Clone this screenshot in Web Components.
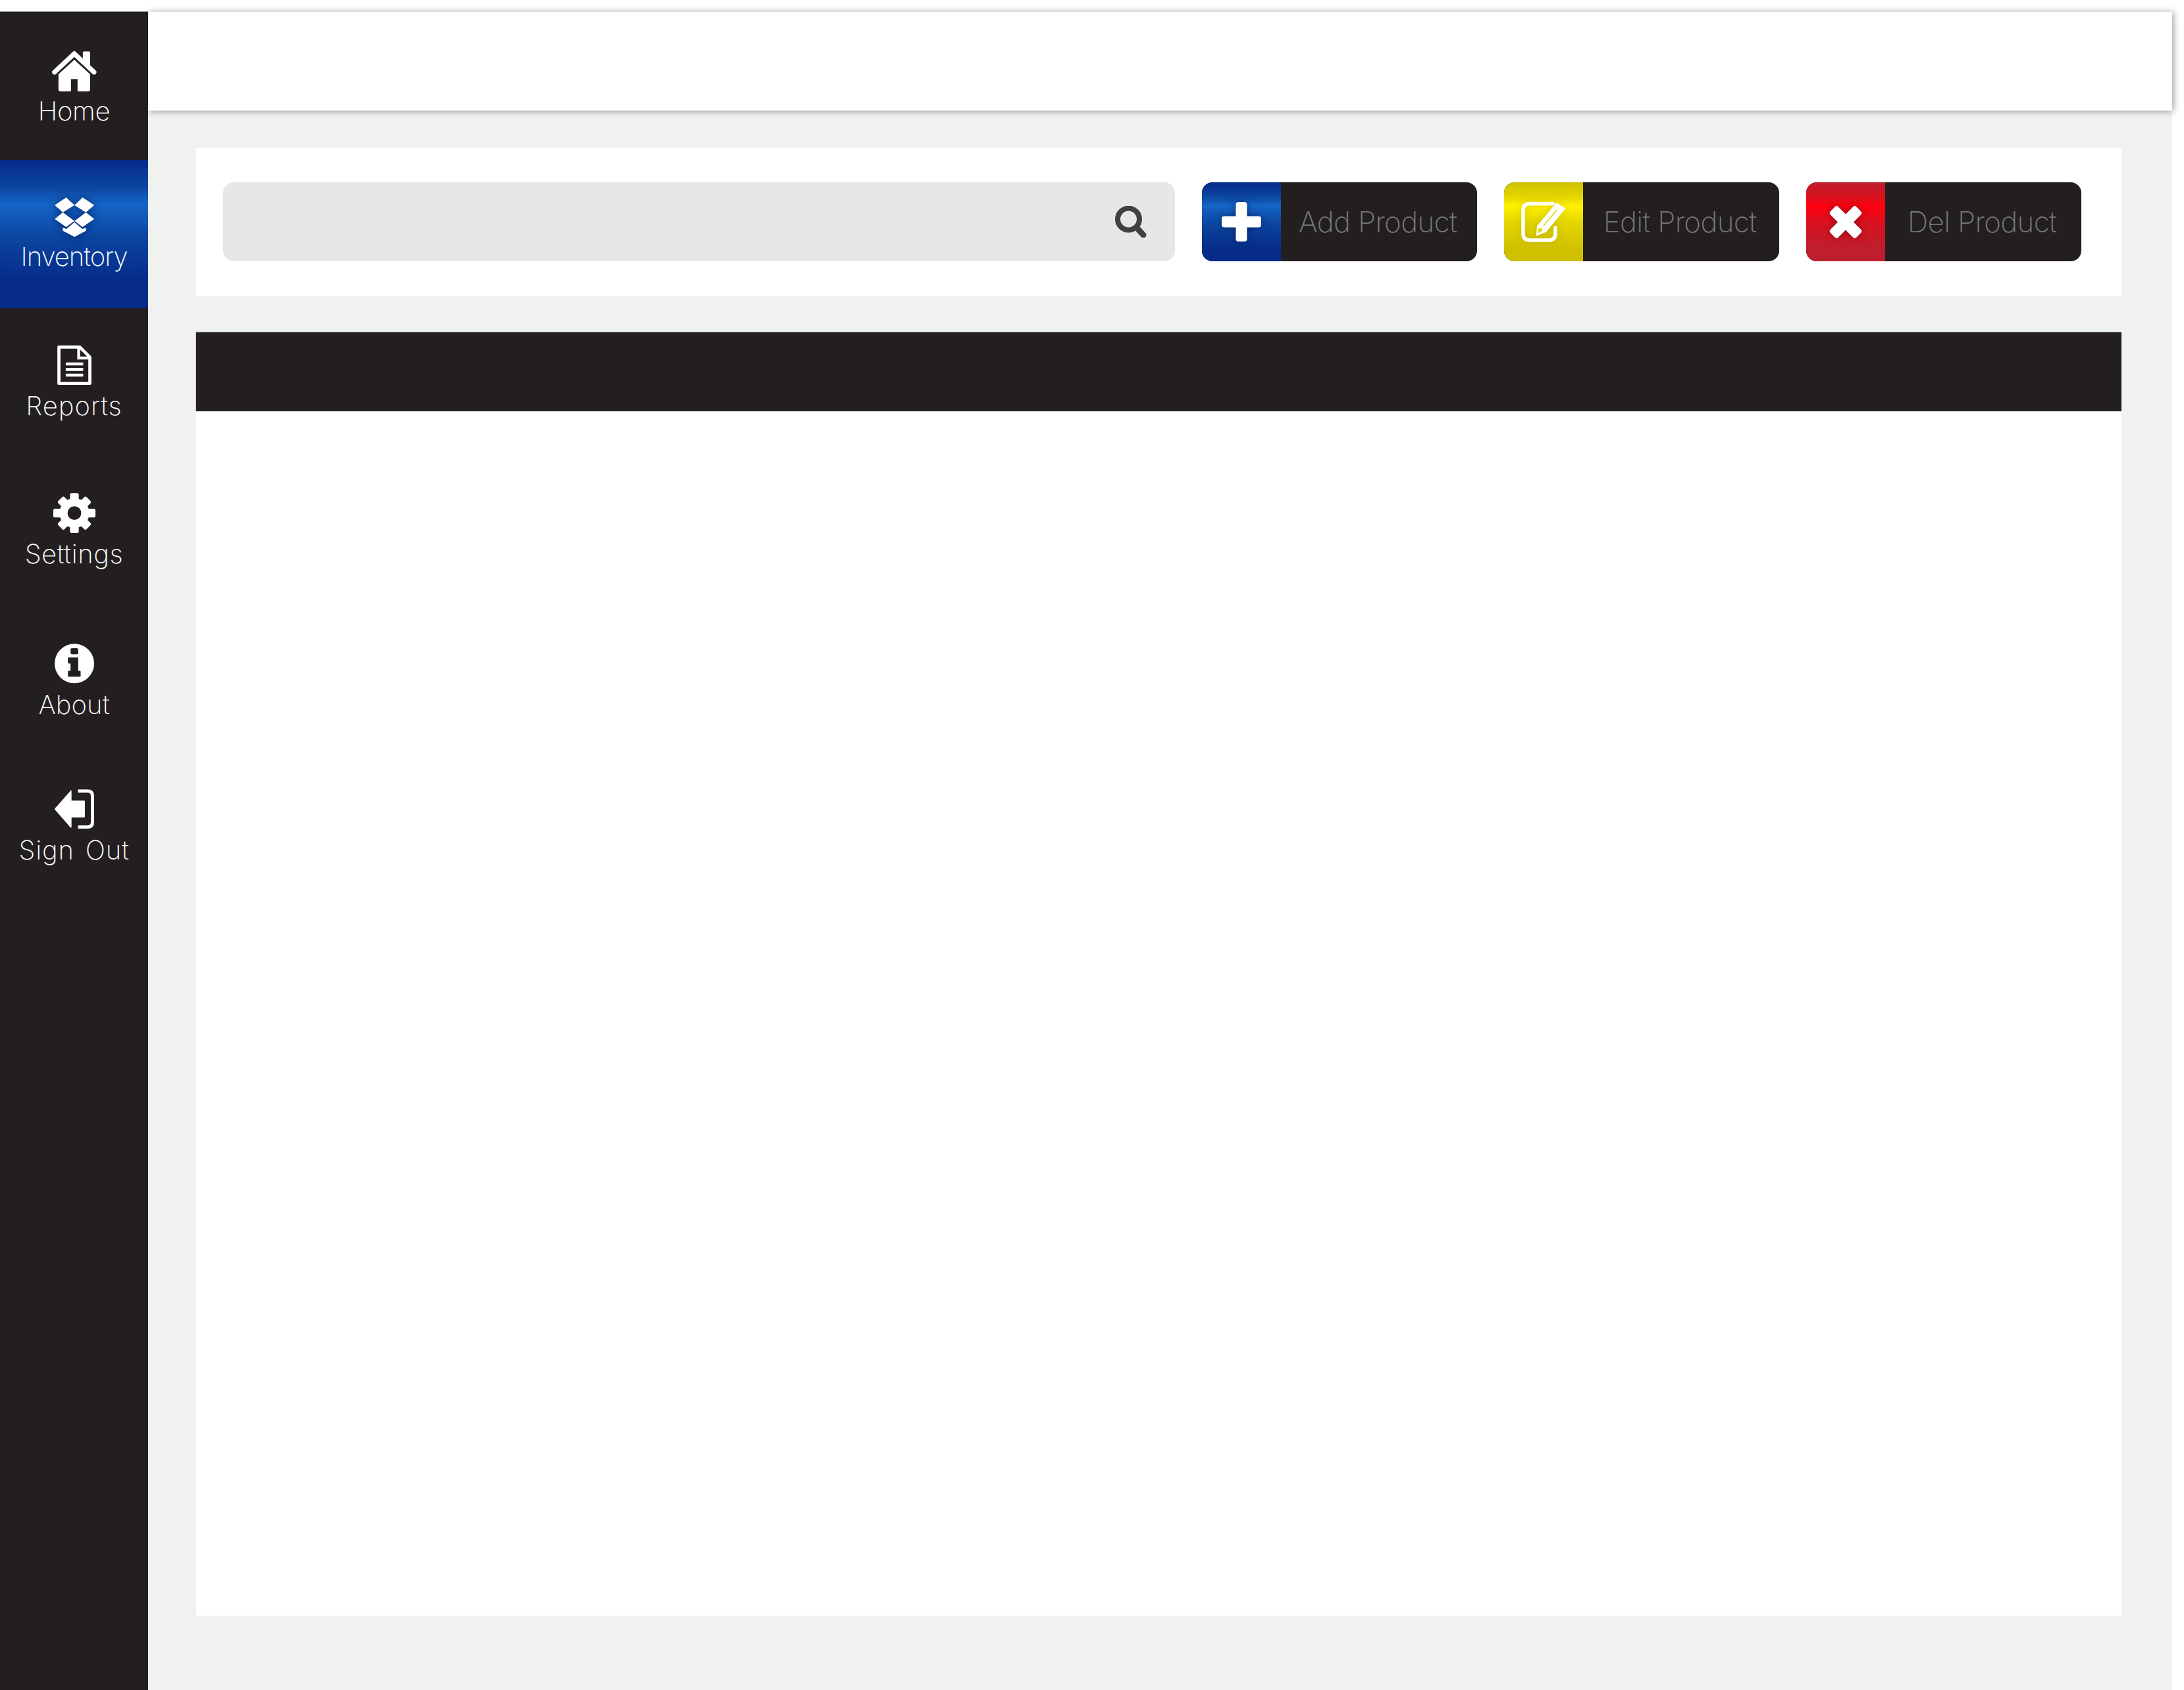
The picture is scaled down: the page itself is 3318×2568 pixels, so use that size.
<!DOCTYPE html>
<html lang="en">
<head>
<meta charset="utf-8">
<title>Inventory</title>
<style>
  html, body {
    background: #fff;
    height: 100%;
    margin: 0;
  }

  body {
    box-sizing: border-box;
    padding: 18px 18px 0 0;
  }
</style>
</head>
<body>
<app-shell>
  <side-nav slot="nav">
    <nav-item style="--gap: 2px; --track: -.3px">
      <svg slot="icon" width="70" height="70" viewBox="232.5 219 210 210">
        <path d="M247 329 L337 245 L427 329" fill="none" stroke="#fff" stroke-width="22" stroke-linecap="round" stroke-linejoin="round"/>
        <path d="M376 240 Q376 235 381 235 H404 Q409 235 409 240 V300 L376 270 Z" fill="#fff"/>
        <path fill="#fff" fill-rule="evenodd" d="M337 272 L409 338 V408 Q409 416 401 416 H352 V361 H322 V416 H273 Q265 416 265 408 V338 Z"/>
      </svg>
      Home
    </nav-item>
    <nav-item active style="--gap: -2px; --track: -1px">
      <svg slot="icon" width="70" height="70" viewBox="232.5 894 210 210">
        <path fill="#fff" d="M248 935 L300 900 L338 935 L285 968 Z M338 935 L375 900 L428 935 L390 968 Z M248 998 L285 968 L338 1007 L300 1035 Z M338 1007 L390 968 L428 998 L375 1035 Z M285 1037 L300 1044 L338 1013 L375 1044 L390 1037 V1052 L338 1080 L285 1052 Z"/>
      </svg>
      Inventory
    </nav-item>
    <nav-item style="--gap: 0px; --track: 1px">
      <svg slot="icon" width="70" height="70" viewBox="232.5 129 210 210">
        <path d="M267 142 H362 L408 188 V308 H267 Z" fill="none" stroke="#fff" stroke-width="14" stroke-linejoin="round"/>
        <path d="M357 142 V192 H408" fill="none" stroke="#fff" stroke-width="13"/>
        <rect x="298" y="212" width="80" height="14" rx="4" fill="#fff"/>
        <rect x="298" y="237" width="80" height="14" rx="4" fill="#fff"/>
        <rect x="298" y="263" width="80" height="14" rx="4" fill="#fff"/>
      </svg>
      Reports
    </nav-item>
    <nav-item style="--gap: 0px; --track: .6px">
      <svg slot="icon" width="70" height="70" viewBox="232.5 804 210 210">
        <g transform="translate(337.5 899)" fill="#fff">
          <rect x="-20" y="-91" width="40" height="182" rx="8"/>
          <rect x="-20" y="-91" width="40" height="182" rx="8" transform="rotate(45)"/>
          <rect x="-20" y="-96" width="40" height="192" rx="8" transform="rotate(90)"/>
          <rect x="-20" y="-91" width="40" height="182" rx="8" transform="rotate(135)"/>
          <circle r="68"/>
          <circle r="31" fill="#231f20"/>
        </g>
      </svg>
      Settings
    </nav-item>
    <nav-item style="--gap: 4px; --track: .1px">
      <svg slot="icon" width="70" height="70" viewBox="232.5 99 210 210">
        <circle cx="337.5" cy="205" r="90" fill="#fff"/>
        <rect x="320" y="135" width="35" height="28" rx="7" fill="#231f20"/>
        <path fill="#231f20" stroke="#231f20" stroke-width="6" stroke-linejoin="round" d="M311 180 H352 V241 H363 V262 H311 V241 H323 V202 H311 Z"/>
      </svg>
      About
    </nav-item>
    <nav-item style="--gap: 0px; --track: .8px">
      <svg slot="icon" width="70" height="70" viewBox="232.5 774 210 210">
        <path fill="#fff" stroke="#fff" stroke-width="5" stroke-linejoin="round" d="M250 868 L322 786 V832 H383 V904 H322 V951 Z"/>
        <path fill="none" stroke="#fff" stroke-width="15" d="M354 786 H398 Q420 786 420 808 V928 Q420 950 398 950 H354"/>
      </svg>
      Sign Out
    </nav-item>
  </side-nav>

  <top-bar slot="top"></top-bar>

  <tool-bar>
    <search-box></search-box>
    <action-button tone="blue">
      <svg slot="icon" width="120" height="120" viewBox="0 0 120 120">
        <rect x="51.5" y="30" width="17" height="60" rx="4" fill="#fff"/>
        <rect x="30" y="51.5" width="60" height="17" rx="4" fill="#fff"/>
      </svg>
      Add Product
    </action-button>
    <action-button tone="yellow">
      <svg slot="icon" width="120" height="120" viewBox="0 0 120 120">
        <path d="M74 32.5 H39 Q29 32.5 29 42.5 V78 Q29 88 39 88 H68 Q78 88 78 78 V69" fill="none" stroke="#fff" stroke-width="5.5" stroke-linecap="round"/>
        <path fill="#fff" stroke="#fff" stroke-width="2" stroke-linejoin="round" d="M50 80 L51 67 L80 32 L92 40 L63 75 Z"/>
        <path fill="none" stroke="#e3d500" stroke-width="1.6" d="M60 66 L80 42"/>
        <path fill="#e3d500" d="M52 71 L56 69 L59 73 L52 77 Z"/>
      </svg>
      Edit Product
    </action-button>
    <action-button tone="red">
      <svg slot="icon" width="120" height="120" viewBox="0 0 120 120">
        <g transform="translate(60 60.5)" fill="#fff">
          <rect x="-28" y="-8.5" width="56" height="17" rx="4" transform="rotate(45)"/>
          <rect x="-28" y="-8.5" width="56" height="17" rx="4" transform="rotate(-45)"/>
        </g>
      </svg>
      Del Product
    </action-button>
  </tool-bar>

  <data-table></data-table>
</app-shell>

<script>
const labelFont = `Inter, 'Liberation Sans', sans-serif`

const templateAppShell = document.createElement('template')
templateAppShell.innerHTML = `
  <style>
    :host {
      background-color: #f0f2f1;
      display: grid;
      grid-template-columns: 225px 1fr;
      grid-template-rows: 150px 1fr;
      height: 100%;
    }

    .nav {
      grid-row: 1 / 3;
      position: relative;
      z-index: 2;
    }

    .content {
      display: flex;
      flex-direction: column;
      gap: 55px;
      padding: 57px 77px 113px 73px;
    }
  </style>

  <div class="nav"><slot name="nav"></slot></div>
  <slot name="top"></slot>
  <div class="content"><slot></slot></div>
`

class AppShell extends HTMLElement {
  constructor() {
    super()
    const shadow = this.attachShadow({ mode: 'open' })
    shadow.appendChild(templateAppShell.content.cloneNode(true))
  }
}

const templateSideNav = document.createElement('template')
templateSideNav.innerHTML = `
  <style>
    :host {
      background-color: #231f20;
      box-shadow: 0 -1px 0 #a0a0a0;
      display: flex;
      flex-direction: column;
      height: 100%;
    }
  </style>

  <slot></slot>
`

class SideNav extends HTMLElement {
  constructor() {
    super()
    const shadow = this.attachShadow({ mode: 'open' })
    shadow.appendChild(templateSideNav.content.cloneNode(true))
  }
}

const templateNavItem = document.createElement('template')
templateNavItem.innerHTML = `
  <style>
    :host {
      align-items: center;
      box-sizing: border-box;
      color: #fff;
      display: flex;
      flex-direction: column;
      font-family: ${labelFont};
      font-size: 40px;
      font-weight: 200;
      height: 225px;
      letter-spacing: var(--track, 0);
      line-height: 48px;
      padding-top: 55px;
      word-spacing: 5px;
    }

    :host([active]) {
      background: linear-gradient(#062b89 0%, #0b469f 18%, #1565c7 30%, #0b469f 52%, #062b89 82%, #062b89 100%);
    }

    :host([active]) ::slotted(svg) {
      filter: drop-shadow(0 0 7px rgba(0, 20, 80, .7));
    }

    .icon {
      display: flex;
      height: 70px;
    }

    .label {
      margin-top: var(--gap, 0);
      white-space: nowrap;
    }
  </style>

  <div class="icon"><slot name="icon"></slot></div>
  <div class="label"><slot></slot></div>
`

class NavItem extends HTMLElement {
  constructor() {
    super()
    const shadow = this.attachShadow({ mode: 'open' })
    shadow.appendChild(templateNavItem.content.cloneNode(true))
  }
}

const templateTopBar = document.createElement('template')
templateTopBar.innerHTML = `
  <style>
    :host {
      background-color: #fff;
      box-shadow: 2px 1px 10px rgba(0, 0, 0, .38);
      display: block;
      position: relative;
      z-index: 1;
    }
  </style>
`

class TopBar extends HTMLElement {
  constructor() {
    super()
    const shadow = this.attachShadow({ mode: 'open' })
    shadow.appendChild(templateTopBar.content.cloneNode(true))
  }
}

const templateToolBar = document.createElement('template')
templateToolBar.innerHTML = `
  <style>
    :host {
      background-color: #fff;
      display: flex;
      gap: 41px;
      height: 225px;
      box-sizing: border-box;
      padding: 52px 61px 53px 41px;
    }
  </style>

  <slot></slot>
`

class ToolBar extends HTMLElement {
  constructor() {
    super()
    const shadow = this.attachShadow({ mode: 'open' })
    shadow.appendChild(templateToolBar.content.cloneNode(true))
  }
}

const templateSearchBox = document.createElement('template')
templateSearchBox.innerHTML = `
  <style>
    :host {
      align-items: center;
      background-color: #e6e7e8;
      border-radius: 16px;
      display: flex;
      flex: 1;
      justify-content: flex-end;
      padding-right: 43px;
    }

    svg {
      display: block;
    }
  </style>

  <svg width="48" height="48" viewBox="0 0 48 48">
    <circle cx="20.5" cy="20" r="16.5" fill="none" stroke="#414042" stroke-width="8"/>
    <path d="M33 33 L43 44" stroke="#414042" stroke-width="9" stroke-linecap="round"/>
  </svg>
`

class SearchBox extends HTMLElement {
  constructor() {
    super()
    const shadow = this.attachShadow({ mode: 'open' })
    shadow.appendChild(templateSearchBox.content.cloneNode(true))
  }
}

const templateActionButton = document.createElement('template')
templateActionButton.innerHTML = `
  <style>
    :host {
      background-color: #231f20;
      border-radius: 16px;
      color: #77797c;
      display: flex;
      flex: 0 0 418px;
      font-family: ${labelFont};
      font-size: 44px;
      font-weight: 200;
      letter-spacing: -.7px;
      overflow: hidden;
    }

    .icon {
      background: linear-gradient(var(--edge) 0%, var(--mid) 18%, var(--glow) 30%, var(--mid) 52%, var(--edge) 85%);
      display: flex;
      flex: 0 0 120px;
    }

    ::slotted(svg) {
      filter: drop-shadow(0 0 6px var(--halo));
    }

    .label {
      align-items: center;
      display: flex;
      flex: 1;
      justify-content: center;
      padding-right: 4px;
      white-space: nowrap;
    }

    :host([tone='blue']) {
      --edge: #062b89;
      --mid: #0b469f;
      --glow: #1565c7;
      --halo: rgba(0, 20, 80, .6);
    }

    :host([tone='yellow']) {
      --edge: #cfc100;
      --mid: #e3d500;
      --glow: #fff200;
      --halo: rgba(120, 110, 0, .25);
    }

    :host([tone='red']) {
      --edge: #be1e2d;
      --mid: #d8121f;
      --glow: #ff0010;
      --halo: rgba(90, 0, 10, .6);
    }
  </style>

  <div class="icon"><slot name="icon"></slot></div>
  <div class="label"><slot></slot></div>
`

class ActionButton extends HTMLElement {
  constructor() {
    super()
    const shadow = this.attachShadow({ mode: 'open' })
    shadow.appendChild(templateActionButton.content.cloneNode(true))
  }
}

const templateDataTable = document.createElement('template')
templateDataTable.innerHTML = `
  <style>
    :host {
      background-color: #fff;
      display: block;
      flex: 1;
    }

    .head {
      background-color: #231f20;
      box-shadow: -1px -1px 0 #c4c4c4;
      height: 120px;
    }
  </style>

  <div class="head"></div>
`

class DataTable extends HTMLElement {
  constructor() {
    super()
    const shadow = this.attachShadow({ mode: 'open' })
    shadow.appendChild(templateDataTable.content.cloneNode(true))
  }
}

customElements.define('app-shell', AppShell)
customElements.define('side-nav', SideNav)
customElements.define('nav-item', NavItem)
customElements.define('top-bar', TopBar)
customElements.define('tool-bar', ToolBar)
customElements.define('search-box', SearchBox)
customElements.define('action-button', ActionButton)
customElements.define('data-table', DataTable)
</script>
</body>
</html>
